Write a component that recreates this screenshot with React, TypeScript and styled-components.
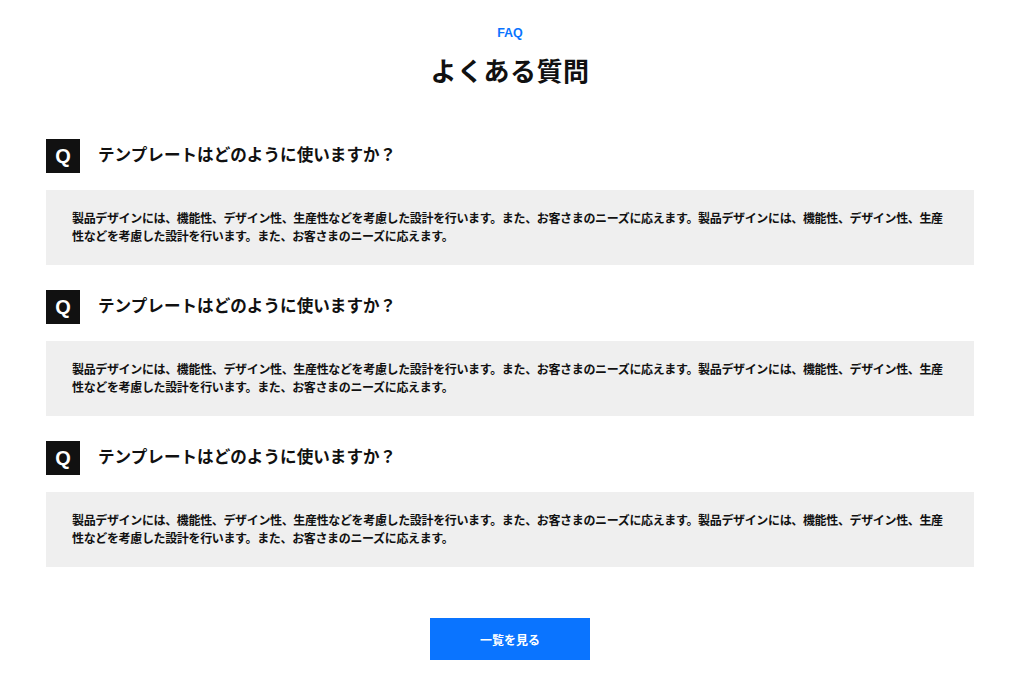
import React from 'react';
import styled, { createGlobalStyle } from 'styled-components';

const GlobalStyle = createGlobalStyle`
  * { box-sizing: border-box; }
  body {
    margin: 0;
    background: #ffffff;
    color: #111111;
    font-family: "Liberation Sans", "Noto Sans CJK JP", sans-serif;
  }
`;

const Page = styled.main`
  width: 928px;
  margin: 0 0 0 46px;
  padding: 25px 0 25px;
  display: flex;
  flex-direction: column;
  align-items: center;
`;

const Eyebrow = styled.p`
  margin: 0;
  font-size: 12.5px;
  line-height: 16px;
  font-weight: 700;
  color: #0a74ff;
`;

const Title = styled.h2`
  margin: 16px 0 0;
  font-size: 26px;
  line-height: 30px;
  font-weight: 700;
  letter-spacing: 0.5px;
`;

const List = styled.div`
  align-self: stretch;
  margin-top: 52px;
  display: flex;
  flex-direction: column;
  gap: 25px;
`;

const Item = styled.section`
  display: flex;
  flex-direction: column;
  gap: 17px;
`;

const Question = styled.div`
  display: flex;
  align-items: center;
  gap: 18px;
`;

const QMark = styled.span`
  width: 34px;
  height: 34px;
  background: #111111;
  color: #ffffff;
  display: flex;
  align-items: center;
  justify-content: center;
  font-family: "Liberation Sans", sans-serif;
  font-size: 20px;
  font-weight: 700;
`;

const QText = styled.h3`
  margin: 0;
  font-size: 16.6px;
  line-height: 24px;
  font-weight: 700;
`;

const Answer = styled.div`
  background: #efefef;
  padding: 20px 24px 19px 26px;
`;

const AText = styled.p`
  margin: 0;
  font-size: 12px;
  line-height: 18px;
  font-weight: 700;
  letter-spacing: -0.35px;
`;

const MoreButton = styled.button`
  margin-top: 51px;
  width: 160px;
  height: 42px;
  border: none;
  background: #0a74ff;
  color: #ffffff;
  font-family: inherit;
  font-size: 12px;
  font-weight: 700;
  cursor: pointer;
`;

const answer =
  '製品デザインには、機能性、デザイン性、生産性などを考慮した設計を行います。また、お客さまのニーズに応えます。製品デザインには、機能性、デザイン性、生産性などを考慮した設計を行います。また、お客さまのニーズに応えます。';

const faqs = [1, 2, 3].map((id) => ({
  id,
  question: 'テンプレートはどのように使いますか？',
  answer,
}));

const App: React.FC = () => {
  return (
    <>
      <GlobalStyle />
      <Page>
        <Eyebrow>FAQ</Eyebrow>
        <Title>よくある質問</Title>
        <List>
          {faqs.map((f) => (
            <Item key={f.id}>
              <Question>
                <QMark>Q</QMark>
                <QText>{f.question}</QText>
              </Question>
              <Answer>
                <AText>{f.answer}</AText>
              </Answer>
            </Item>
          ))}
        </List>
        <MoreButton>一覧を見る</MoreButton>
      </Page>
    </>
  );
};

export default App;
